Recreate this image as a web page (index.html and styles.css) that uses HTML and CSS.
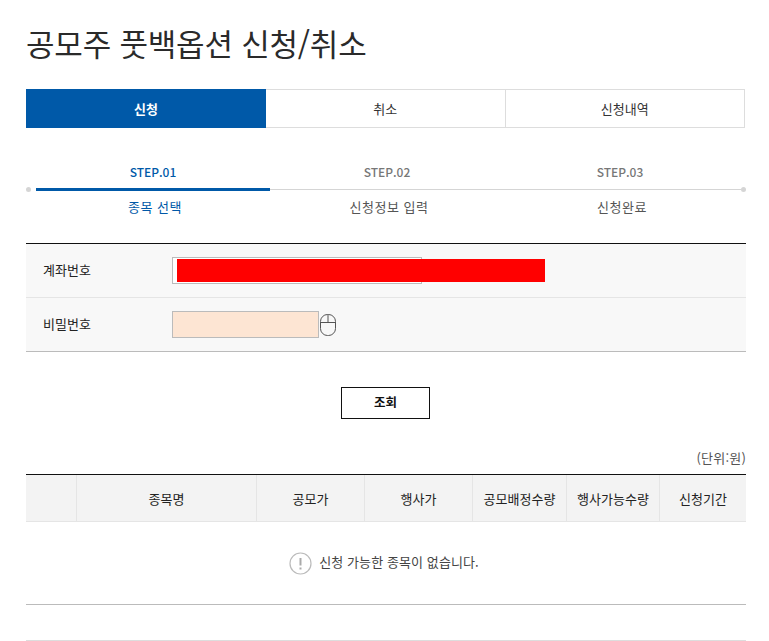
FILE: index.html
```html
<!DOCTYPE html>
<html lang="ko">
<head>
<meta charset="utf-8">
<title>공모주 풋백옵션 신청/취소</title>
<link rel="stylesheet" href="styles.css">
</head>
<body>
<main class="page">
  <h1 class="title">공모주 풋백옵션 신청/취소</h1>
  <nav class="tabs">
    <a class="tab tab-on">신청</a>
    <a class="tab">취소</a>
    <a class="tab">신청내역</a>
  </nav>
  <section class="steps">
    <div class="step-row labels">
      <span class="on">STEP.01</span>
      <span>STEP.02</span>
      <span>STEP.03</span>
    </div>
    <div class="track"><i class="dot"></i><i class="progress"></i><i class="rail"></i><i class="dot"></i></div>
    <div class="step-row names">
      <span class="on">종목 선택</span>
      <span>신청정보 입력</span>
      <span>신청완료</span>
    </div>
  </section>
  <section class="form">
    <div class="form-row">
      <label class="form-label">계좌번호</label>
      <div class="account"><div class="redact"></div></div>
    </div>
    <div class="form-row last">
      <label class="form-label">비밀번호</label>
      <div class="password"></div>
      <svg class="mouse" width="16" height="22" viewBox="0 0 16 22" fill="none" stroke="#555" stroke-width="1"><rect x="0.5" y="0.5" width="15" height="21" rx="7"/><path d="M0.5 8.5H15.5M8 0.5V8.5"/></svg>
    </div>
  </section>
  <div class="actions"><button class="btn">조회</button></div>
  <p class="unit">(단위:원)</p>
  <div class="grid-head">
    <div class="cell"></div>
    <div class="cell">종목명</div>
    <div class="cell">공모가</div>
    <div class="cell">행사가</div>
    <div class="cell">공모배정수량</div>
    <div class="cell">행사가능수량</div>
    <div class="cell">신청기간</div>
  </div>
  <div class="empty">
    <svg class="alert" width="23" height="23" viewBox="0 0 23 23" fill="none"><circle cx="11.5" cy="11.5" r="10.5" stroke="#bbb" stroke-width="1.2"/><path d="M11.5 6V13.5" stroke="#aaa" stroke-width="2"/><path d="M11.5 15.5V17.5" stroke="#aaa" stroke-width="2"/></svg>
    <span class="empty-text">신청 가능한 종목이 없습니다.</span>
  </div>
  <div class="spacer"></div>
</main>
</body>
</html>
```
FILE: styles.css
```css
* { box-sizing: border-box; }
html, body { margin: 0; padding: 0; background: #fff; }
body { font-family: "Noto Sans CJK KR", "Noto Sans", sans-serif; color: #222; overflow: hidden; }
.page { width: 720px; margin-left: 26px; }
.title { margin: 0; height: 89px; padding-top: 20px; font-size: 31px; line-height: 46px; font-weight: 400; letter-spacing: -0.2px; color: #2a2a2a; }
.tabs { display: flex; height: 39px; }
.tab { flex: 0 0 239.5px; display: flex; align-items: center; justify-content: center; font-size: 13px; color: #333; background: #fff; border: 1px solid #ddd; border-left: 0; }
.tab:first-child { flex-basis: 240px; }
.tab-on { background: #0059a8; color: #fff; font-weight: 700; border: 0; }
.steps { padding-top: 35px; height: 115px; }
.step-row { display: grid; grid-template-columns: 254px 214px 252px; text-align: center; color: #666; }
.labels { height: 18px; line-height: 18px; font-size: 12px; font-weight: 500; color: #777; }
.names { margin-top: 6px; padding-left: 2px; line-height: 18px; font-size: 13px; letter-spacing: 0.5px; color: #555; }
.step-row .on { color: #0059a8; }
.track { display: flex; align-items: center; height: 6px; margin-top: 5px; }
.dot { flex: none; width: 5px; height: 5px; border-radius: 50%; background: #d5d5d5; }
.progress { flex: none; width: 234px; height: 3px; margin-left: 5px; background: #0059a8; }
.rail { flex: 1; height: 1px; background: #d5d5d5; }
.form { border-top: 1px solid #111; }
.form-row { position: relative; display: flex; align-items: center; height: 54px; background: #f8f8f8; border-bottom: 1px solid #e5e5e5; }
.form-row.last { border-bottom-color: #bbb; }
.form-label { flex: none; width: 146px; padding-left: 17px; padding-bottom: 2px; font-size: 13px; color: #222; }
.account { position: relative; width: 250px; height: 27px; background: #fff; border: 1px solid #bbb; }
.redact { position: absolute; left: 4px; top: 1px; width: 368px; height: 23px; background: #f00; }
.password { width: 147px; height: 27px; background: #fde5d3; border: 1px solid #bbb; }
.mouse { margin-left: 1px; }
.actions { display: flex; justify-content: center; padding-top: 35px; }
.btn { width: 89px; height: 32px; margin-left: -1px; background: #fff; border: 1px solid #111; font: 700 12.5px "Noto Sans CJK KR", sans-serif; color: #111; padding: 0 0 3px; }
.unit { margin: 30px 0 0; height: 25px; line-height: 18px; font-size: 13px; letter-spacing: 0.2px; text-align: right; color: #555; }
.grid-head { display: grid; grid-template-columns: 51px 180px 108px 108px 94px 93px 86px; height: 48px; background: #f3f3f3; border-top: 1px solid #111; border-bottom: 1px solid #e5e5e5; }
.cell { display: flex; align-items: center; justify-content: center; font-size: 13px; color: #222; border-right: 1px solid #e5e5e5; }
.cell:last-child { border-right: 0; }
.empty { display: flex; align-items: center; justify-content: center; gap: 7px; height: 83px; padding-right: 4px; font-size: 13px; color: #444; border-bottom: 1px solid #bbb; }
.empty-text { letter-spacing: 0.1px; padding-bottom: 3px; }
.spacer { height: 36px; border-bottom: 1px solid #ddd; }
```
